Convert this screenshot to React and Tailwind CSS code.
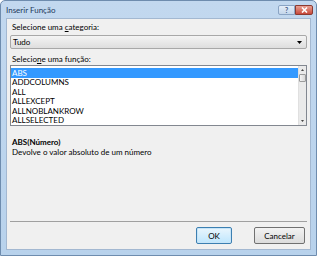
export default function App() {
  const items = ["ABS", "ADDCOLUMNS", "ALL", "ALLEXCEPT", "ALLNOBLANKROW", "ALLSELECTED"];
  return (
    <div className="w-[317px] h-[256px] flex flex-col bg-gradient-to-b from-[#c2d8ef] to-[#b8d2ec] border border-[#6e8cae] rounded-t-[5px]" style={{ fontFamily: 'Lato, "Noto Sans", sans-serif' }}>
      <div className="h-[17px] flex items-center justify-between pl-[5px] pr-[3px] shrink-0">
        <span className="text-[8px] text-[#1e395b] leading-none">Inserir Função</span>
        <div className="flex items-center mt-[1px]">
          <div className="w-[17px] h-[10px] border border-[#8aa4c4] rounded-l-[2px] bg-gradient-to-b from-[#e4eef9] to-[#c4d6eb] flex items-center justify-center">
            <span className="text-[7px] leading-none text-[#3d5b84] font-bold">?</span>
          </div>
          <div className="w-[18px] h-[10px] border border-[#8b3a31] rounded-r-[2px] bg-gradient-to-b from-[#e8a093] to-[#c7473a] flex items-center justify-center">
            <svg width="7" height="6" viewBox="0 0 7 6"><path d="M1 0.5 L6 5.5 M6 0.5 L1 5.5" stroke="white" strokeWidth="1.6" /></svg>
          </div>
        </div>
      </div>
      <div className="flex-1 mx-[5px] mb-[5px] bg-[#f0f0f0] border border-[#a3b8d1] flex flex-col text-[8px] text-black leading-none">
        <div className="pl-[5px] pt-[4px] h-[16px]">Selecione uma <span className="underline">c</span>ategoria:</div>
        <div className="mx-[3px] h-[14px] border border-[#a8a8a8] rounded-[2px] bg-gradient-to-b from-[#f4f4f4] to-[#dedede] flex items-center justify-between pl-[2px] pr-[4px]">
          <span>Tudo</span>
          <svg width="5" height="3" viewBox="0 0 5 3"><path d="M0 0 H5 L2.5 3 Z" fill="#000" /></svg>
        </div>
        <div className="pl-[5px] pt-[6px] h-[16px]">Selecio<span className="underline">n</span>e uma função:</div>
        <div className="mx-[3px] h-[61px] border border-[#828790] bg-white flex">
          <div className="flex-1 flex flex-col pt-[2px]">
            {items.map((it, i) => (
              <div key={it} className={"h-[9.5px] flex items-center pl-[1px] " + (i === 0 ? "bg-[#3399ff] text-white" : "")}>{it}</div>
            ))}
          </div>
          <div className="w-[8px] bg-[#eaeaea] border-l border-[#e0e0e0] flex flex-col items-center">
            <div className="h-[8px] flex items-center justify-center">
              <svg width="3" height="2" viewBox="0 0 3 2"><path d="M0 2 H3 L1.5 0 Z" fill="#444" /></svg>
            </div>
            <div className="w-[7px] h-[8px] border border-[#9c9c9c] rounded-[1px] bg-gradient-to-r from-[#f4f4f4] to-[#d8d8d8]" />
            <div className="flex-1" />
            <div className="h-[8px] flex items-center justify-center">
              <svg width="3" height="2" viewBox="0 0 3 2"><path d="M0 0 H3 L1.5 2 Z" fill="#444" /></svg>
            </div>
          </div>
        </div>
        <div className="pl-[5px] pt-[12px] font-bold">ABS(Número)</div>
        <div className="pl-[5px] pt-[2px]">Devolve o valor absoluto de um número</div>
        <div className="flex-1" />
        <div className="mx-[3px] border-t border-[#a0a0a0]" />
        <div className="flex justify-end gap-[22px] pr-[5px] pt-[5px] pb-[5px]">
          <div className="w-[36px] h-[17px] border border-[#3c7fb1] rounded-[2px] bg-gradient-to-b from-[#eaf6fd] to-[#bee6fd] flex items-center justify-center shadow-[inset_0_0_0_1px_#c6e4f8]">OK</div>
          <div className="w-[51px] h-[17px] border border-[#707070] rounded-[2px] bg-gradient-to-b from-[#f2f2f2] to-[#dcdcdc] flex items-center justify-center">Cancelar</div>
        </div>
      </div>
    </div>
  );
}
